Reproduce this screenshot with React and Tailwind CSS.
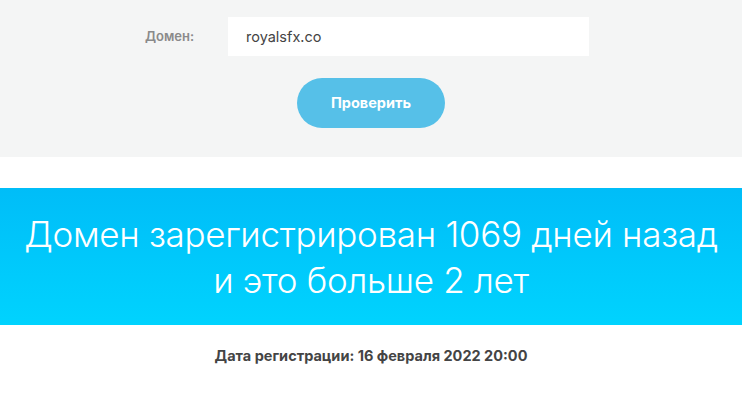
export default function App() {
  return (
    <div className="min-h-screen bg-white font-['Inter',sans-serif]">
      <section className="bg-[#f4f5f5] h-[157px] flex flex-col items-center pt-[17px]">
        <div className="flex items-center">
          <label htmlFor="domain" className="w-[83px] ml-[-8px] text-[13px] font-semibold text-[#8a8a8a]">
            Домен:
          </label>
          <input
            id="domain"
            defaultValue="royalsfx.co"
            className="w-[361px] h-[39px] bg-white px-[18px] text-[14.5px] text-[#444] outline-none"
          />
        </div>
        <button className="mt-[22px] w-[148px] h-[50px] rounded-full bg-[#56c0e8] text-white text-[14.5px] font-bold">
          Проверить
        </button>
      </section>
      <div className="h-[31px]" />
      <section className="h-[137px] bg-gradient-to-b from-[#00bdf8] to-[#00d3fe] flex flex-col items-center justify-center text-white text-[35px] font-light leading-[46px] tracking-[-0.3px]">
        <p>Домен зарегистрирован 1069 дней назад</p>
        <p>и это больше 2 лет</p>
      </section>
      <p className="mt-[20px] text-center text-[14.5px] font-bold text-[#444]">
        Дата регистрации: 16 февраля 2022 20:00
      </p>
    </div>
  );
}
